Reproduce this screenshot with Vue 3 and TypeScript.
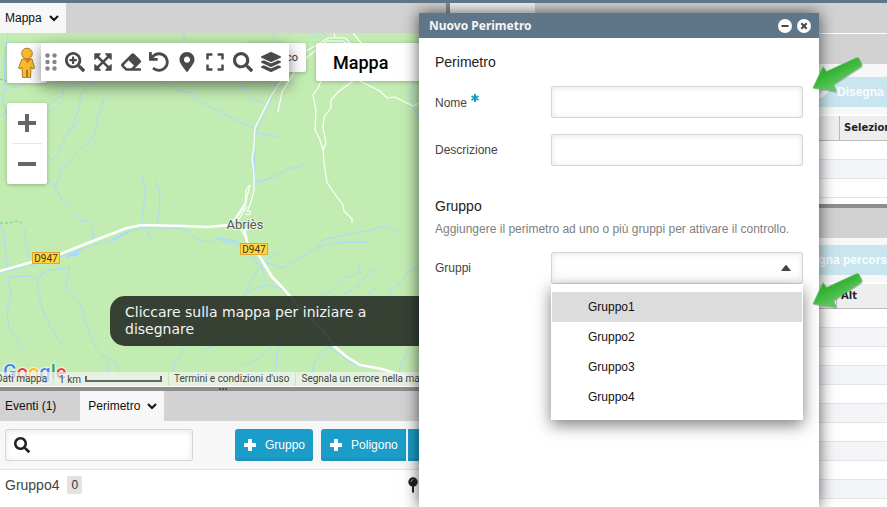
<script setup lang="ts">
import { ref } from 'vue'

interface Tool {
  label: string
  box: string
  path: string
}

const tools: Tool[] = [
  { label: 'Zoom avanti', box: '0 0 512 512', path: 'M304 192v32c0 6.6-5.4 12-12 12h-56v56c0 6.6-5.4 12-12 12h-32c-6.6 0-12-5.4-12-12v-56h-56c-6.6 0-12-5.4-12-12v-32c0-6.6 5.4-12 12-12h56v-56c0-6.6 5.4-12 12-12h32c6.6 0 12 5.4 12 12v56h56c6.6 0 12 5.4 12 12zm201 284.7L476.7 505c-9.4 9.4-24.6 9.4-33.9 0L343 405.3c-4.5-4.5-7-10.6-7-17V372c-35.3 27.6-79.7 44-128 44C93.1 416 0 322.9 0 208S93.1 0 208 0s208 93.1 208 208c0 48.3-16.4 92.7-44 128h16.3c6.4 0 12.5 2.5 17 7l99.7 99.7c9.3 9.4 9.3 24.6 0 34zM344 208c0-75.2-60.8-136-136-136S72 132.8 72 208s60.8 136 136 136 136-60.8 136-136z' },
  { label: 'Estendi', box: '0 0 512 512', path: 'M32 50a18 18 0 0 1 18-18h142l14 14-52 60 102 106 102-106-52-60 14-14h142a18 18 0 0 1 18 18v142l-14 14-60-52-106 102 106 102 60-52 14 14v142a18 18 0 0 1-18 18H320l-14-14 52-60-102-106-102 106 52 60-14 14H50a18 18 0 0 1-18-18V320l14-14 60 52 106-102-106-102-60 52-14-14z' },
  { label: 'Cancella', box: '0 0 512 512', path: 'M497.941 273.941c18.745-18.745 18.745-49.137 0-67.882l-160-160c-18.745-18.745-49.136-18.746-67.883 0l-256 256c-18.745 18.745-18.745 49.137 0 67.882l96 96A48.004 48.004 0 0 0 144 480h356c6.627 0 12-5.373 12-12v-40c0-6.627-5.373-12-12-12H355.883l142.058-142.059zm-302.627-62.627l137.373 137.373L265.373 416H150.628l-80-80 124.686-124.686z' },
  { label: 'Annulla', box: '0 0 512 512', path: 'M212.333 224.333H12c-6.627 0-12-5.373-12-12V12C0 5.373 5.373 0 12 0h48c6.627 0 12 5.373 12 12v78.112C117.773 39.279 184.26 7.47 258.175 8.007c136.906.994 246.448 111.623 246.157 248.532C504.041 393.258 393.12 504 256.333 504c-64.089 0-122.496-24.313-166.51-64.215-5.099-4.622-5.334-12.554-.467-17.42l33.967-33.967c4.474-4.474 11.662-4.717 16.401-.525C170.76 415.336 211.58 432 256.333 432c97.268 0 176-78.716 176-176 0-97.267-78.716-176-176-176-58.496 0-110.28 28.476-142.274 72.333h98.274c6.627 0 12 5.373 12 12v48c0 6.627-5.373 12-12 12z' },
  { label: 'Posizione', box: '0 0 384 512', path: 'M172.268 501.67C26.97 291.031 0 269.413 0 192 0 85.961 85.961 0 192 0s192 85.961 192 192c0 77.413-26.97 99.031-172.268 309.67-9.535 13.774-29.93 13.773-39.464 0zM192 272c44.183 0 80-35.817 80-80s-35.817-80-80-80-80 35.817-80 80 35.817 80 80 80z' },
  { label: 'Schermo intero', box: '0 0 448 512', path: 'M0 180V56c0-13.3 10.7-24 24-24h124c6.6 0 12 5.4 12 12v40c0 6.6-5.4 12-12 12H64v84c0 6.6-5.4 12-12 12H12c-6.6 0-12-5.4-12-12zM288 44v40c0 6.6 5.4 12 12 12h84v84c0 6.6 5.4 12 12 12h40c6.6 0 12-5.4 12-12V56c0-13.3-10.7-24-24-24H300c-6.6 0-12 5.4-12 12zm148 276h-40c-6.6 0-12 5.4-12 12v84h-84c-6.6 0-12 5.4-12 12v40c0 6.6 5.4 12 12 12h124c13.3 0 24-10.7 24-24V332c0-6.6-5.4-12-12-12zM160 468v-40c0-6.6-5.4-12-12-12H64v-84c0-6.6-5.4-12-12-12H12c-6.6 0-12 5.4-12 12v124c0 13.3 10.7 24 24 24h124c6.6 0 12-5.4 12-12z' },
  { label: 'Cerca', box: '0 0 512 512', path: 'M505 442.7L405.3 343c-4.5-4.5-10.6-7-17-7H372c27.6-35.3 44-79.7 44-128C416 93.1 322.9 0 208 0S0 93.1 0 208s93.1 208 208 208c48.3 0 92.7-16.4 128-44v16.3c0 6.4 2.5 12.5 7 17l99.7 99.7c9.4 9.4 24.6 9.4 33.9 0l28.3-28.3c9.4-9.4 9.4-24.6.1-34zM208 336c-70.7 0-128-57.2-128-128 0-70.7 57.2-128 128-128 70.7 0 128 57.2 128 128 0 70.7-57.2 128-128 128z' },
  { label: 'Livelli', box: '0 0 512 512', path: 'M12.41 148.02l232.94 105.67c6.8 3.09 14.49 3.09 21.29 0l232.94-105.67c16.55-7.51 16.55-32.52 0-40.03L266.65 2.31a25.607 25.607 0 0 0-21.29 0L12.41 107.98c-16.55 7.51-16.55 32.53 0 40.04zm487.18 88.28l-58.09-26.33-161.64 73.27c-7.56 3.43-15.59 5.17-23.86 5.17s-16.29-1.74-23.86-5.17L70.51 209.97l-58.1 26.33c-16.55 7.5-16.55 32.5 0 40l232.94 105.59c6.8 3.08 14.49 3.08 21.29 0L499.59 276.3c16.55-7.5 16.55-32.5 0-40zm0 127.8l-57.87-26.23-161.86 73.37c-7.56 3.43-15.59 5.17-23.86 5.17s-16.29-1.74-23.86-5.17L70.29 337.87 12.41 364.1c-16.55 7.5-16.55 32.5 0 40l232.94 105.59c6.8 3.08 14.49 3.08 21.29 0L499.59 404.1c16.55-7.5 16.55-32.5 0-40z' },
]
const searchPath: string = tools[6].path

const streams: string[] = [
  'M8 33L4 62L5 89L2 100L7 115', 'M0 116L7 113', 'M5 89L16 87L26 83',
  'M93 82L80 94L80 106L73 125L67 134L60 150L54 158L47 162', 'M81 117L73 130L67 134',
  'M105 98L97 118L98 122L93 138L78 152L62 169L55 187L62 200L80 220L87 221L92 228L93 240',
  'M47 178L55 187', 'M48 105L62 96L64 89L82 82', 'M47 114L60 103',
  'M183 33L186 43', 'M163 81L178 90L190 92L200 102L223 113L240 122L255 128', 'M238 81L252 97L266 105',
  'M277 82L270 103L256 131L255 147L254 190', 'M255 132L260 134L270 135L279 137',
  'M255 183L272 178L288 169L300 166L308 162', 'M273 33L277 43', 'M307 43L318 33', 'M323 33L330 39L345 40L351 43',
  'M413 83L410 97L417 115L419 120', 'M142 177L145 190L145 200L142 214L142 224', 'M156 181L160 193L159 213L157 223',
  'M0 273L32 265L60 257L93 245L115 240L130 231L142 228L183 228L198 240L210 242L220 238L238 242L250 255L262 268L267 285L252 290L240 298L220 297L200 305',
  'M0 223L4 233L7 267', 'M25 228L26 247L29 258', 'M142 228L147 231L151 240',
  'M8 277L30 276L38 280L42 273L50 270L70 267L66 280L66 288L80 303L88 330L97 350L107 360L109 372', 'M103 355L113 360L121 373',
  'M38 280L38 293L44 313L50 327L62 344', 'M8 277L11 295L7 313L9 327L23 349',
  'M202 322L192 337L183 350L175 363L172 372', 'M200 353L209 348L230 336',
  'M220 241L238 245L263 262L283 268L317 248L323 240L340 236L373 230L382 226L390 228L397 232', 'M317 248L333 243L367 242',
  'M361 264L357 275L343 278L332 290L303 308L283 333L277 352L276 373', 'M379 266L367 275L357 287L343 295L330 308',
  'M419 265L408 272L400 283L393 288L387 298L350 340L325 348L315 362L312 372',
  'M278 253L270 257L260 267L250 282L246 291', 'M267 285L280 288L290 300L305 318', 'M377 287L360 301L345 307L330 315',
  'M272 347L265 353L252 363L243 364', 'M300 308L313 335L330 348L350 362L365 368', 'M409 347L400 367L399 375', 'M253 180L268 180L275 173',
]

const tracks: string[] = [
  'M289 70L278 85L270 98L255 128L254 147L252 158L254 175L254 190L251 202L247 212',
  'M300 54L317 45L328 38L345 38L353 46', 'M304 60L327 41L343 41L360 53', 'M278 112L282 92L296 70', 'M353 33L363 45', 'M334 33L335 37',
  'M321 81L318 88L313 95L316 110L315 130L320 140L323 150L324 163L327 182L332 190L343 205L344 211L352 219L352 223',
  'M353 81L338 92L331 100L331 108L324 117L323 128L326 143L323 150',
  'M360 81L380 91L387 98L395 97L413 106L419 103',
  'M250 185L246 190L245 203L238 214L231 223', 'M250 185L249 190L247 196L246 204L236 219', 'M247 206L238 221', 'M248 211L251 212L249 215L245 214', 'M244 208L233 222',
  'M241 230L244 235L247 228',
]

const groups: string[] = ['Gruppo1', 'Gruppo2', 'Gruppo3', 'Gruppo4']
const highlighted = ref<string>('Gruppo1')
const chosen = ref<string>('')
const nome = ref<string>('')
const descrizione = ref<string>('')
const filtro = ref<string>('')
</script>

<template>
  <div class="app">
    <main class="workspace">
      <section class="left">
        <nav class="tabs">
          <button class="tab active" type="button">
            Mappa
            <svg class="chevron" viewBox="0 0 10 6"><path d="M1 1l4 4 4-4" /></svg>
          </button>
        </nav>

        <div class="map">
          <svg class="terrain" viewBox="0 33 446 354" preserveAspectRatio="xMinYMin slice" aria-hidden="true">
            <rect y="33" width="446" height="354" fill="#c3ecb2" />
            <g fill="none" stroke="#aadaff" stroke-linejoin="round">
              <path v-for="d in streams" :key="d" :d="d" />
              <path d="M66 257L82 250M112 240L128 232M218 238L238 242" stroke-width="2" />
              <path d="M72 256L79 253" stroke-width="3" />
            </g>
            <path d="M0 223h9l4-1 4-1 5 2M0 79l7 2" fill="none" stroke="#7cc98a" stroke-dasharray="3 2" />
            <g fill="none" stroke="#fff" stroke-width="1.2" stroke-linejoin="round">
              <path v-for="d in tracks" :key="d" :d="d" />
            </g>
            <path d="M0 271L32 262L60 254L93 241L127 228L142 225L183 226L207 227L230 225L244 229L247 242L260 257L272 277L282 287L300 308L323 330L335 347L347 357L360 365L382 369L420 381" fill="none" stroke="#fff" stroke-width="2.6" stroke-linejoin="round" />
            <g class="road-signs">
              <rect x="32.500" y="252.500" width="27" height="11" />
              <text x="46" y="262">D947</text>
              <rect x="240.500" y="243.500" width="27" height="11" />
              <text x="254" y="253">D947</text>
            </g>
            <text class="town" x="245" y="229">Abriès</text>
          </svg>

          <div class="map-controls">
            <button class="pegman" type="button" aria-label="Street View">
              <svg viewBox="0 0 18 32" width="18" height="32">
                <g fill="#fbbc2c" stroke="#a87b28" stroke-width="1">
                  <path d="M4 12h10l2.500 9-2 1-1.500-2-.5 10.500H9.500V23h-1v7.500h-4L4 20l-1.500 2-2-1z" />
                  <circle cx="9" cy="6.500" r="5.300" />
                </g>
                <path d="M6 11.500h7l-3.500 5z" fill="#e8762d" />
              </svg>
            </button>
            <div class="zoom">
              <button type="button" aria-label="Zoom avanti"><svg viewBox="0 0 18 18" width="18" height="18"><path d="M0 9h18M9 0v18" /></svg></button>
              <hr />
              <button type="button" aria-label="Zoom indietro"><svg viewBox="0 0 18 18" width="18" height="18"><path d="M0 9h18" /></svg></button>
            </div>
          </div>

          <div class="map-types">
            <button class="traffic" type="button">co</button>
            <button class="type" type="button">Mappa</button>
          </div>

          <div class="toolbar">
            <svg class="handle" viewBox="0 0 12 18" aria-hidden="true">
              <circle cx="2.500" cy="2.500" r="2.200" /><circle cx="9.500" cy="2.500" r="2.200" />
              <circle cx="2.500" cy="9" r="2.200" /><circle cx="9.500" cy="9" r="2.200" />
              <circle cx="2.500" cy="15.500" r="2.200" /><circle cx="9.500" cy="15.500" r="2.200" />
            </svg>
            <button v-for="tool in tools" :key="tool.label" type="button" :aria-label="tool.label">
              <svg :viewBox="tool.box"><path :d="tool.path" /></svg>
            </button>
          </div>

          <p class="hint">Cliccare sulla mappa per iniziare a disegnare</p>

          <div class="google" aria-label="Google"><span class="b">G</span><span class="r">o</span><span class="y">o</span><span class="b">g</span><span class="g">l</span><span class="r">e</span></div>
          <footer class="credits">
            <span class="data">Dati mappa</span>
            <span class="scale">1 km <i></i></span>
            <a href="#">Termini e condizioni d'uso</a>
            <a href="#">Segnala un errore nella mappa</a>
          </footer>
        </div>

        <div class="splitter"><span></span></div>

        <div class="zones">
          <nav class="tabs">
            <button class="tab" type="button">Eventi (1)</button>
            <button class="tab active second" type="button">
              Perimetro
              <svg class="chevron" viewBox="0 0 10 6"><path d="M1 1l4 4 4-4" /></svg>
            </button>
          </nav>
          <div class="actions">
            <label class="search">
              <svg viewBox="0 0 512 512"><path :d="searchPath" /></svg>
              <input v-model="filtro" type="text" aria-label="Cerca" />
            </label>
            <button class="add" type="button"><svg viewBox="0 0 12 12"><path d="M6 0v12M0 6h12" /></svg>Gruppo</button>
            <div class="joined">
              <button class="add" type="button"><svg viewBox="0 0 12 12"><path d="M6 0v12M0 6h12" /></svg>Poligono</button>
              <button class="add more" type="button" aria-label="Altro"></button>
            </div>
          </div>
          <div class="entry">
            <span>Gruppo4</span><span class="count">0</span>
            <svg class="pin" viewBox="0 0 10 16"><circle cx="5" cy="5" r="4.700" /><path d="M4 9h2v6l-1 1-1-1z" /><path d="M3 5a2.500 2.500 0 0 1 2.500-2.500" class="shine" /></svg>
          </div>
        </div>
      </section>

      <section class="right">
        <div class="upper">
          <nav class="tabs"><span class="blank-tab"></span></nav>
          <div class="bar"></div>
          <div class="tools first">
            <button type="button"><svg viewBox="0 0 12 12"><path d="M0 12l1-4 7-7 3 3-7 7z" /></svg>Disegna percorso</button>
          </div>
          <table class="selection">
            <thead><tr><th></th><th>Selezionato</th></tr></thead>
            <tbody><tr v-for="n in 3" :key="n"><td></td><td></td></tr></tbody>
          </table>
        </div>
        <div class="splitter"></div>
        <div class="lower">
          <div class="bar"></div>
          <div class="tools last"><button type="button">Disegna percorso</button></div>
          <table class="altitude">
            <thead><tr><th></th><th>Alt</th></tr></thead>
            <tbody><tr v-for="n in 11" :key="n"><td></td><td></td></tr></tbody>
          </table>
        </div>
      </section>
    </main>

    <div class="dialog" role="dialog" aria-labelledby="dialog-title">
      <header>
        <h1 id="dialog-title">Nuovo Perimetro</h1>
        <button type="button" aria-label="Riduci"><svg viewBox="0 0 14 14"><circle cx="7" cy="7" r="7" /><path d="M3.500 7h7" /></svg></button>
        <button type="button" aria-label="Chiudi"><svg viewBox="0 0 14 14"><circle cx="7" cy="7" r="7" /><path d="M4.300 4.300l5.400 5.400M9.700 4.300l-5.400 5.400" /></svg></button>
      </header>
      <form @submit.prevent>
        <fieldset>
          <h2>Perimetro</h2>
          <div class="field">
            <label for="nome">Nome<svg class="required" viewBox="0 0 8 8"><path d="M4 0v8M.5 2l7 4M7.500 2l-7 4" /></svg></label>
            <input id="nome" v-model="nome" type="text" required />
          </div>
          <div class="field">
            <label for="descrizione">Descrizione</label>
            <input id="descrizione" v-model="descrizione" type="text" />
          </div>
        </fieldset>
        <fieldset>
          <h2>Gruppo</h2>
          <p>Aggiungere il perimetro ad uno o più gruppi per attivare il controllo.</p>
          <div class="field">
            <label for="gruppi">Gruppi</label>
            <div class="combo">
              <select id="gruppi" v-model="chosen">
                <option value=""></option>
                <option v-for="g in groups" :key="g">{{ g }}</option>
              </select>
              <svg class="caret" viewBox="0 0 10 6"><path d="M0 6l4-5.300a1.300 1.300 0 0 1 2 0L10 6z" /></svg>
              <ul role="listbox" aria-label="Gruppi">
                <li
                  v-for="g in groups"
                  :key="g"
                  role="option"
                  :aria-selected="g === highlighted"
                  :class="{ on: g === highlighted }"
                  @mouseenter="highlighted = g"
                  @click="chosen = g"
                >{{ g }}</li>
              </ul>
            </div>
          </div>
        </fieldset>
      </form>
    </div>

    <svg v-for="n in 2" :key="n" class="arrow" :class="{ low: n === 2 }" viewBox="0 0 54 40" aria-hidden="true">
      <defs>
        <linearGradient :id="'leaf' + n" x1="0" y1="0" x2=".8" y2="1">
          <stop offset="0" stop-color="#129c12" /><stop offset=".4" stop-color="#2fb02f" /><stop offset=".75" stop-color="#5cc85c" /><stop offset="1" stop-color="#35c035" />
        </linearGradient>
      </defs>
      <path d="M2 34L12 12.500L15.500 17.500L45 4Q47 3 48 4.500L50.500 9.500Q51.500 11.500 49.500 13L22.500 30.500L25 38z" fill="#0003" transform="translate(1 1)" />
      <path d="M2 34L12 12.500L15.500 17.500L45 4Q47 3 48 4.500L50.500 9.500Q51.500 11.500 49.500 13L22.500 30.500L25 37z" :fill="`url(#leaf${n})`" stroke="#6dbb6d" stroke-width=".8" />
    </svg>
  </div>
</template>

<style>
body {
  margin: 0;
  overflow: hidden;
}
</style>

<style scoped>
* {
  box-sizing: border-box;
}
button {
  border: 0;
  padding: 0;
  background: none;
  font: inherit;
  color: inherit;
}
.app {
  position: relative;
  display: flex;
  flex-direction: column;
  height: 100vh;
  overflow: hidden;
  border-top: 3px solid #5f7588;
  background: #fff;
  color: #222;
  font: 12px/16px "Liberation Sans", Arial, sans-serif;
}
.workspace {
  flex: 1;
  display: flex;
  min-height: 0;
}
.left {
  flex: 0 0 450px;
  display: flex;
  flex-direction: column;
  border-right: 4px solid #8e8e8e;
  min-width: 0;
}
.right {
  flex: 1;
  min-width: 0;
  overflow: hidden;
}
.tabs {
  display: flex;
  height: 30px;
  background: #d2d2d2;
}
.tab {
  display: flex;
  align-items: center;
  gap: 7px;
  padding: 0 7px 0 5px;
  color: #111;
}
.tab.active {
  background: #f7f7f7;
}
.tab.second {
  margin-left: 17px;
  padding: 0 7px 0 8px;
}
.chevron {
  width: 10px;
  height: 6px;
  overflow: visible;
  fill: none;
  stroke: #111;
  stroke-width: 2;
}
.map {
  position: relative;
  flex: 1;
  min-height: 0;
  overflow: hidden;
  border-bottom: 1px solid #fff;
}
.terrain {
  position: absolute;
  inset: 0;
  width: 100%;
  height: 354px;
}
.road-signs rect {
  fill: #ffd740;
  stroke: #e5a52a;
}
.road-signs text {
  font: 10px Roboto, sans-serif;
  text-anchor: middle;
  fill: #3a3320;
}
.town {
  font: 13px Roboto, sans-serif;
  text-anchor: middle;
  fill: #54575b;
  stroke: #e6f6df;
  stroke-width: 2;
  paint-order: stroke;
}
.map-controls {
  position: absolute;
  left: 7px;
  top: 10px;
  display: grid;
  gap: 20px;
}
.pegman,
.zoom,
.map-types button {
  background: #fff;
  border-radius: 2px;
  box-shadow: 0 1px 4px rgba(0, 0, 0, 0.25);
}
.pegman {
  display: grid;
  place-items: center;
  width: 40px;
  height: 40px;
}
.zoom {
  width: 40px;
}
.zoom button {
  display: grid;
  place-items: center;
  width: 100%;
  height: 40px;
}
.zoom hr {
  margin: 0 5px;
  border: 0;
  border-top: 1px solid #e6e6e6;
}
.zoom path {
  stroke: #666;
  stroke-width: 4;
}
.map-types {
  position: absolute;
  left: 246px;
  right: 0;
  top: 10px;
  display: flex;
  align-items: flex-start;
  gap: 10px;
}
.traffic {
  width: 60px;
  height: 29px;
  padding-right: 8px;
  text-align: right;
  font: 11px Roboto, sans-serif;
  color: #333;
}
.map-types .type {
  flex: 1;
  height: 38px;
  padding-left: 17px;
  text-align: left;
  font: 500 18px Roboto, sans-serif;
  color: #000;
}
.toolbar {
  position: absolute;
  left: 41px;
  top: 10px;
  display: flex;
  align-items: center;
  height: 38px;
  padding: 0 4px;
  background: #fff;
  box-shadow: 0 5px 15px rgba(0, 0, 0, 0.5);
}
.handle {
  width: 12px;
  height: 18px;
  margin-right: 4px;
  fill: #858585;
}
.toolbar button {
  display: grid;
  place-items: center;
  width: 28px;
  height: 38px;
}
.toolbar button svg {
  width: 20px;
  height: 20px;
  fill: #4a4a4a;
}
.hint {
  position: absolute;
  left: 110px;
  right: 0;
  bottom: 40px;
  margin: 0;
  padding: 8px 64px 8px 15px;
  border-radius: 15px 0 0 15px;
  background: rgba(28, 32, 28, 0.84);
  color: #f4f4f4;
  font: 14px/17px "DejaVu Sans", Verdana, sans-serif;
}
.google {
  position: absolute;
  left: 3px;
  bottom: 2px;
  font: 500 20px/24px Roboto, sans-serif;
  text-shadow: 0 0 2px #fff, 0 0 2px #fff, 0 0 2px #fff;
}
.google .b { color: #4285f4; }
.google .r { color: #ea4335; }
.google .y { color: #fbbc05; }
.google .g { color: #34a853; }
.credits {
  position: absolute;
  left: -4px;
  right: 0;
  bottom: 0;
  display: flex;
  height: 14px;
  overflow: hidden;
  background: rgba(245, 245, 245, 0.7);
  font: 10px/13px Roboto, sans-serif;
  color: #444;
  white-space: nowrap;
}
.credits > * {
  padding: 0 6px 0 5px;
  border-right: 1px solid #c3ecb2;
  color: inherit;
  text-decoration: none;
}
.credits .data {
  padding-left: 0;
}
.scale {
  display: flex;
  align-items: center;
  gap: 4px;
}
.scale i {
  width: 77px;
  height: 6px;
  border: 2px solid #666;
  border-top: 0;
}
.splitter {
  display: grid;
  place-items: center;
  height: 4px;
  background: #8e8e8e;
}
.splitter span {
  width: 8px;
  border-top: 2px dotted #555;
}
.zones {
  flex: 0 0 116px;
  background: #fff;
}
.actions {
  display: flex;
  gap: 8px;
  align-items: center;
  height: 49px;
  padding: 0 0 1px 5px;
  overflow: hidden;
  background: #f7f7f7;
  border-bottom: 1px solid #e2e2e2;
}
.search {
  position: relative;
  flex: 0 0 188px;
  margin-right: 34px;
}
.search svg {
  position: absolute;
  left: 9px;
  top: 8px;
  width: 16px;
  height: 16px;
  fill: #222;
}
input,
select {
  display: block;
  width: 100%;
  height: 32px;
  padding: 0 8px;
  border: 1px solid #d6d6d6;
  border-radius: 2px;
  background: #fff;
  box-shadow: inset 0 1px 6px rgba(0, 0, 0, 0.1);
  color: #222;
  font: inherit;
}
.search input {
  padding-left: 32px;
}
.joined {
  display: flex;
  gap: 2px;
}
.add {
  display: flex;
  align-items: center;
  flex: none;
  gap: 9px;
  height: 32px;
  padding: 0 8px 0 9px;
  border-radius: 3px;
  background: #1b9dc9;
  box-shadow: inset 0 -3px #1a93bd;
  color: #fff;
}
.joined .add {
  border-radius: 3px 0 0 3px;
}
.joined .more {
  width: 30px;
  border-radius: 0 3px 3px 0;
}
.add svg {
  width: 12px;
  height: 12px;
  stroke: #fff;
  stroke-width: 4;
}
.entry {
  display: flex;
  align-items: center;
  gap: 8px;
  height: 30px;
  padding: 0 28px 0 5px;
  font-size: 14px;
  color: #444;
}
.count {
  padding: 1px 4px;
  border-radius: 2px;
  background: #e2e2e2;
  color: #333;
  font-size: 12px;
}
.pin {
  width: 10px;
  height: 16px;
  margin-left: auto;
  fill: #222;
}
.pin .shine {
  fill: none;
  stroke: #999;
}
.blank-tab {
  width: 85px;
  background: #f7f7f7;
}
.upper {
  height: 201px;
  overflow: hidden;
}
.upper .tabs {
  height: 31px;
  border-bottom: 1px solid #fff;
}
.bar {
  height: 30px;
  background: #d2d2d2;
}
.tools {
  display: flex;
  background: #f7f7f7;
}
.tools button {
  display: flex;
  align-items: center;
  gap: 6px;
  flex: 1;
  height: 30px;
  background: #c9e6f0;
  color: #f7fcfe;
  font-weight: bold;
  white-space: nowrap;
}
.tools svg {
  width: 12px;
  height: 12px;
  fill: #fff;
}
.tools.first {
  padding: 13px 0 7px;
  border-bottom: 2px solid #fff;
}
.tools.first button {
  padding-left: 369px;
}
.tools.last {
  padding: 7px 0;
  border-bottom: 2px solid #fff;
}
.tools.last button {
  padding-left: 343px;
}
table {
  width: 100%;
  border-collapse: separate;
  border-spacing: 0;
  table-layout: fixed;
}
th {
  height: 25px;
  padding: 0 0 0 4px;
  border-bottom: 1px solid #bbb;
  background: #eee;
  color: #222;
  text-align: left;
  white-space: nowrap;
  overflow: hidden;
  font: bold 10px/16px "DejaVu Sans", Verdana, sans-serif;
}
th + th {
  border-left: 1px solid #bbb;
}
.selection th:first-child {
  width: 389px;
}
.altitude th:first-child {
  width: 386px;
}
td {
  height: 19px;
  padding: 0;
  border-bottom: 1px solid #e4e4e4;
}
tbody tr:nth-child(even) {
  background: #f4f5f8;
}
.dialog {
  position: absolute;
  left: 419px;
  top: 10px;
  bottom: 0;
  width: 400px;
  background: #fff;
  box-shadow: 0 0 15px rgba(0, 0, 0, 0.65);
}
.dialog header {
  display: flex;
  align-items: center;
  gap: 5px;
  height: 25px;
  padding: 0 8px 0 10px;
  background: #5f7588;
}
h1 {
  flex: 1;
  margin: 0;
  color: #f4f6f8;
  font: bold 12px/16px "Noto Sans", sans-serif;
}
.dialog header svg {
  display: block;
  width: 14px;
  height: 14px;
  fill: #fff;
  stroke: none;
}
.dialog header svg path {
  stroke: #444;
  stroke-width: 2;
}
form {
  display: grid;
  gap: 32px;
  padding: 16px;
}
fieldset {
  display: grid;
  gap: 16px;
  min-width: 0;
  margin: 0;
  padding: 0;
  border: 0;
}
h2 {
  margin: 0;
  color: #222;
  font-weight: normal;
  font-size: 14px;
  line-height: 16px;
}
fieldset p {
  margin: -8px 0 0;
  color: #808080;
  line-height: 14px;
}
.field {
  display: grid;
  grid-template-columns: 116px 1fr;
  align-items: center;
}
.field label {
  color: #444;
}
.required {
  width: 8px;
  height: 8px;
  margin: 0 0 5px 4px;
  stroke: #1b9dc9;
  stroke-width: 2;
}
.combo {
  position: relative;
}
select {
  appearance: none;
}
.caret {
  position: absolute;
  right: 12px;
  top: 13px;
  width: 10px;
  height: 6px;
  fill: #444;
}
ul {
  position: absolute;
  left: 0;
  right: 0;
  top: 32px;
  margin: 0;
  padding: 8px 1px;
  list-style: none;
  background: #fff;
  box-shadow: 0 5px 15px rgba(0, 0, 0, 0.5);
}
li {
  padding: 7px 36px;
  color: #111;
}
li.on {
  background: #dcdcdc;
}
.arrow {
  position: absolute;
  left: 811px;
  top: 51px;
  width: 54px;
  height: 40px;
}
.arrow.low {
  top: 267px;
}
</style>
